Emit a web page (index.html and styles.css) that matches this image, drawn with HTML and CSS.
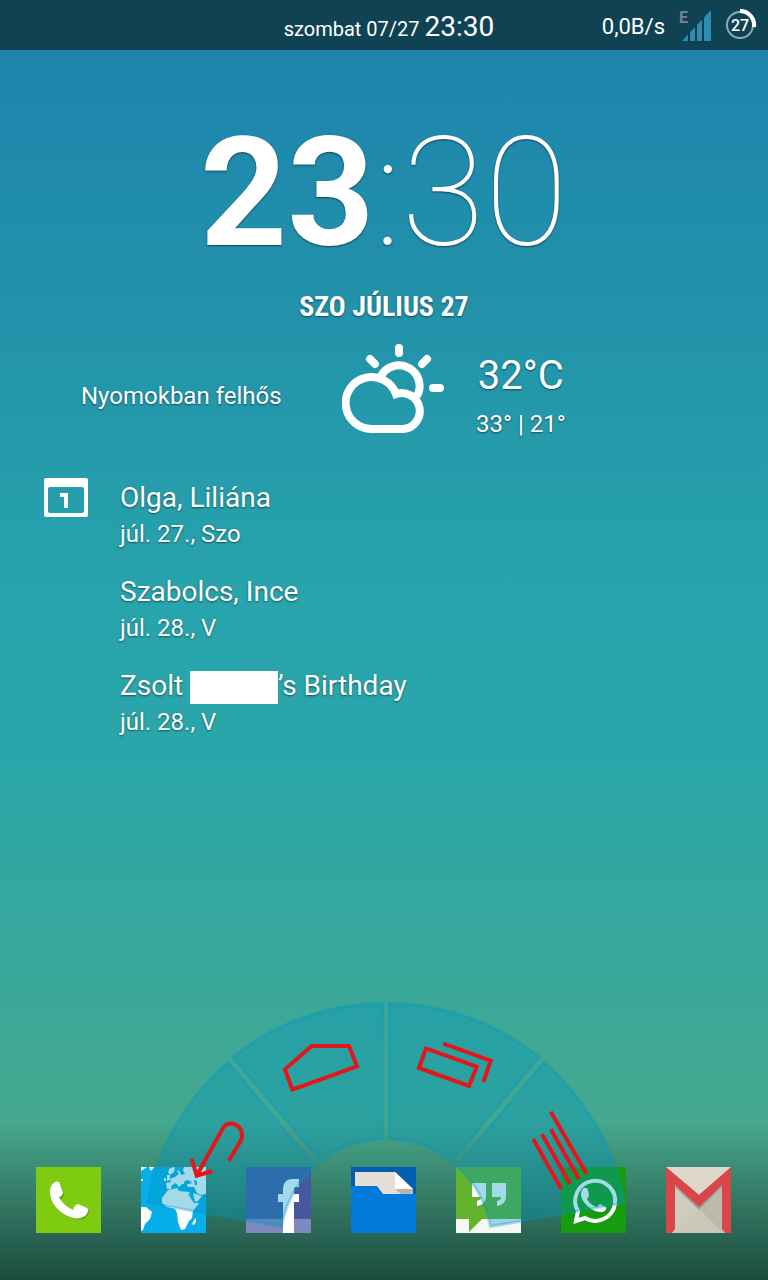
FILE: index.html
```
<!DOCTYPE html>
<html lang="hu">

<head>
    <meta charset="UTF-8">
    <meta name="viewport" content="width=device-width, initial-scale=1">
    <title>Kezdőképernyő</title>
    <link rel="stylesheet" href="styles.css">
</head>

<body>
    <!-- status bar -->
    <header class="status">
        <div class="status-clock">szombat 07/27 <span class="status-time">23:30</span></div>
        <div class="status-icons">
            <span class="status-speed">0,0B/s</span>
            <svg class="status-signal" viewBox="0 0 36 34" aria-label="E">
                <text x="1" y="15" class="signal-type">E</text>
                <path d="M4 33L33 2V33Z" fill="#2c8db0" />
                <path d="M11 24V34M18 16V34M25 9V34" stroke="#0e3d50" stroke-width="2" />
            </svg>
            <svg class="status-battery" viewBox="0 0 34 34">
                <circle cx="17" cy="17" r="13" fill="none" stroke="#8fa9b3" stroke-width="2" />
                <path d="M17 3A14 14 0 0 1 31 19" fill="none" stroke="#fff" stroke-width="4" />
                <text x="17" y="23" class="battery-text">27</text>
            </svg>
        </div>
    </header>

    <!-- clock widget -->
    <main class="widget">
        <div class="clock"><span class="clock-hour">23</span>:30</div>
        <div class="date">SZO JÚLIUS 27</div>

        <div class="weather">
            <div class="weather-text">Nyomokban felhős</div>
            <svg class="weather-icon" viewBox="0 0 102 92">
                <g fill="none" stroke="#fff" stroke-width="8">
                    <path d="M31 87A26 26 0 1 1 54 52A18 18 0 1 1 61 87Z" />
                    <path d="M39 34A19 19 0 0 1 75 54" />
                    <path d="M57 6V11M28 17L33 22M85 17L80 22M91 46H98" stroke-linecap="round" />
                </g>
            </svg>
            <div class="weather-temp">
                <div class="temp-now">32°C</div>
                <div class="temp-range">33° | 21°</div>
            </div>
        </div>

        <div class="calendar">
            <svg class="calendar-icon" viewBox="0 0 44 40">
                <path fill="#fff" fill-rule="evenodd" d="M2 0H42Q44 0 44 2V37Q44 39 42 39H2Q0 39 0 37V2Q0 0 2 0ZM6 9Q4 9 4 11V33Q4 35 6 35H38Q40 35 40 33V11Q40 9 38 9Z" />
                <path d="M16 17H22V30" fill="none" stroke="#fff" stroke-width="4" />
            </svg>
            <ul class="events">
                <li class="event">
                    <div class="event-title">Olga, Liliána</div>
                    <div class="event-date">júl. 27., Szo</div>
                </li>
                <li class="event">
                    <div class="event-title">Szabolcs, Ince</div>
                    <div class="event-date">júl. 28., V</div>
                </li>
                <li class="event">
                    <div class="event-title">Zsolt <span class="event-hidden"></span>’s Birthday</div>
                    <div class="event-date">júl. 28., V</div>
                </li>
            </ul>
        </div>
    </main>

    <!-- app dock -->
    <nav class="dock">
        <button class="app" type="button" aria-label="Telefon">
            <svg viewBox="0 0 65 66">
                <rect width="65" height="66" fill="#7ecb0f" />
                <path fill="#5fa50a" d="M19 18C21 16 24 16 25 19L28 28C27 31 25 32 24 32C27 38 32 42 38 45C39 42 41 39 43 39L52 43C54 45 53 47 51 49C48 53 43 53 38 52C25 48 15 38 15 26Z" />
                <path fill="#fff" d="M18 16C20 14 23 14 24 17L27 26C26 29 24 30 23 30C26 36 31 40 37 43C38 40 40 37 42 37L51 41C53 43 52 45 50 48C47 51 42 52 37 51C24 47 14 37 14 24C14 20 16 17 18 16Z" />
            </svg>
        </button>
        <button class="app" type="button" aria-label="Böngésző">
            <svg viewBox="0 0 65 66">
                <rect width="65" height="66" fill="#06aeea" />
                <g fill="#fff">
                    <path d="M26 22L25 16L30 15L29 12L34 10L38 7L36 4L40 0H65V27L60 28L56 26L53 20H47L46 17L41 17L38 20L35 16L31 18L30 22Z" />
                    <path d="M27 23L36 21L38 24L48 25L53 36L58 36L52 44L51 51L48 54L44 62L40 63L37 55L36 46L34 42L26 40L21 36L21 31Z" />
                    <path d="M52 26L61 29L57 34L54 35Z" />
                    <path d="M0 40L5 40L11 45L9 52L4 57L2 63L0 64Z" />
                    <path d="M53 53L55 51V55L53 58L51 57Z" />
                    <path d="M0 0H6L3 2L0 4ZM8 0H13L10 4ZM26 8L29 8L29 13L26 14ZM23 11H25V14H23ZM29 1L34 0L33 5L29 8L27 5ZM0 12H2V14H0Z" />
                </g>
                <g fill="#06aeea">
                    <path d="M43 15L46 13L49 14L51 16L47 17H43ZM53 13L56 14V18L54 18ZM37 3L39 5L40 8L44 7L42 3L43 0H40ZM49 27L54 35L53 36L47 27Z" />
                </g>
            </svg>
        </button>
        <button class="app" type="button" aria-label="Facebook">
            <svg viewBox="0 0 65 66">
                <rect width="65" height="66" fill="#4658a0" />
                <rect y="52" width="65" height="14" fill="#8089bd" />
                <path fill="#fff" d="M37 66V35H32V27H37V23C37 15 41 12 47 12H53V20H50C48 20 48 21 48 23V27H53V35H48V66Z" />
            </svg>
        </button>
        <button class="app" type="button" aria-label="Fájlok">
            <svg viewBox="0 0 65 66">
                <rect width="65" height="66" fill="#0060ae" />
                <path fill="#007bdc" d="M0 19H26L32 27H65V66H0Z" />
                <path fill="#e3dfd5" d="M4 5H44L62 22V27H32L26 19H4Z" />
                <path fill="#fff" d="M44 5L62 22H44Z" />
                <path fill="#bab5aa" d="M44 22H62V27H50Z" />
            </svg>
        </button>
        <button class="app" type="button" aria-label="Hangouts">
            <svg viewBox="0 0 65 66">
                <rect width="65" height="66" fill="#f5f7f5" />
                <path fill="#63b32e" d="M0 0H65V52H26L13 65V52H0Z" />
                <path fill="#fff" d="M16 16H30V28C30 35 27 38 21 39V34C24 33 25 32 25 30H16ZM36 16H50V28C50 35 47 38 41 39V34C44 33 45 32 45 30H36Z" />
            </svg>
        </button>
        <button class="app" type="button" aria-label="WhatsApp">
            <svg viewBox="0 0 65 66">
                <rect width="65" height="66" fill="#179c0e" />
                <path fill="none" stroke="#fff" stroke-width="4" d="M15 54L17 44A20 20 0 1 1 24 51Z" />
                <path fill="#fff" d="M21 23C23 20 26 20 27 23L28 28C28 30 26 31 26 32C28 36 32 39 36 40L39 37L45 40C46 43 43 45 40 45C30 45 19 34 20 26Z" />
            </svg>
        </button>
        <button class="app" type="button" aria-label="Gmail">
            <svg viewBox="0 0 65 66">
                <rect width="65" height="66" fill="#cfcbbe" />
                <path fill="#bdbaac" d="M33 42L57 18V66Z" />
                <path fill="#cbc8bb" d="M8 66L33 42L57 66Z" />
                <path fill="#a09d92" d="M9 20L33 43L56 20V16H9Z" />
                <path fill="#dcd7c9" d="M0 0H65L33 28Z" />
                <path fill="#d94548" d="M0 0L33 28L65 0V66H59L56 62V18L33 40L9 18V62L6 66H0Z" />
            </svg>
        </button>
    </nav>

    <!-- pie control over the dock -->
    <svg class="pie" viewBox="0 0 492 250">
        <a href="#back" aria-label="Vissza">
            <path class="slice" d="M90 62A242 242 0 0 0 9.7 203L143.6 226.6A106 106 0 0 1 177.4 166.2Z" />
            <path class="glyph" d="M90.7 161L102 142C110 128 92 117 85 128L59 175M53.7 159L58.7 175.7L74.3 171" />
        </a>
        <a href="#home" aria-label="Kezdőlap">
            <path class="slice" d="M245 3A242 242 0 0 0 94.8 57.2L182.2 161.4A106 106 0 0 1 245 139Z" />
            <path class="glyph" d="M173.7 46H211L219 66.3L154.3 89.7L147 69.3Z" />
        </a>
        <a href="#recent" aria-label="Legutóbbiak">
            <path class="slice" d="M251 3A242 242 0 0 1 401.2 57.2L313.8 161.4A106 106 0 0 0 251 139Z" />
            <path class="glyph" d="M288 48.3L338.7 66.7L331 86L281 68ZM305.3 43.7L352.7 60.7L345.3 82" />
        </a>
        <a href="#menu" aria-label="Menü">
            <path class="slice" d="M406 62A242 242 0 0 1 486.3 203L352.4 226.6A106 106 0 0 0 318.6 166.2Z" />
            <path class="glyph" d="M412.7 111.7L448.7 174M412.7 129.3L441 179M404 134.3L432 183.7M395.3 139L423.3 189" />
        </a>
    </svg>
</body>

</html>
```
FILE: styles.css
```
* {
    box-sizing: border-box;
}

body {
    margin: 0;
    min-height: 100vh;
    position: relative;
    display: flex;
    flex-direction: column;
    font-family: Roboto, "Noto Sans", sans-serif;
    color: #fff;
    /* dark fade behind the dock, over the wallpaper */
    background:
        linear-gradient(to top, rgba(10, 30, 25, .68), rgba(10, 30, 25, 0) 160px),
        linear-gradient(#1e84ae 50px, #2292aa 300px, #27a4ac 600px, #2aa6aa 760px, #3ba898 1000px, #48a98c 1150px);
}

/* status bar */
.status {
    display: grid;
    grid-template-columns: 1fr auto 1fr;
    align-items: center;
    height: 50px;
    padding: 0 11px 0 21px;
    background: #0f4354;
}

.status-clock {
    grid-column: 2;
    padding-top: 2px;
    font-size: 20px;
}

.status-time {
    font-size: 28px;
}

.status-icons {
    display: flex;
    justify-content: flex-end;
    align-items: center;
}

.status-speed {
    margin-right: 13px;
    padding-top: 2px;
    font-size: 22px;
}

.status-signal {
    width: 36px;
    height: 34px;
    margin-right: 9px;
    overflow: visible;
}

.status-battery {
    width: 34px;
    height: 34px;
}

.signal-type {
    font-size: 16px;
    font-weight: 700;
    fill: #6f8690;
}

.battery-text {
    font-size: 16px;
    font-weight: 500;
    text-anchor: middle;
    fill: #fff;
}

/* clock widget */
.widget {
    flex: 1;
    text-shadow: 0 1px 2px rgba(0, 0, 0, .5);
}

.clock {
    margin-top: 53px;
    font-size: 152px;
    font-weight: 100;
    line-height: 180px;
    text-align: center;
}

.clock-hour {
    font-weight: 700;
}

.date {
    margin-top: 6px;
    font-family: "Roboto Condensed", "Liberation Sans Narrow", Roboto, sans-serif;
    font-size: 28px;
    font-weight: 700;
    line-height: 36px;
    text-align: center;
}

.weather {
    display: grid;
    grid-template-columns: 262px 102px auto;
    column-gap: 31px;
    align-items: start;
    justify-content: start;
    padding: 17px 0 0 49px;
}

.weather-text {
    padding: 40px 0 0 32px;
    font-size: 24px;
    line-height: 28px;
    white-space: nowrap;
}

.weather-icon {
    width: 102px;
    height: 92px;
}

.weather-temp {
    padding: 8px 0 0 1px;
    text-align: center;
}

.temp-now {
    font-size: 40px;
    line-height: 52px;
}

.temp-range {
    font-size: 24px;
    line-height: 44px;
}

.calendar {
    display: flex;
    gap: 32px;
    padding: 32px 44px 0;
}

.calendar-icon {
    width: 44px;
    height: 40px;
}

.events {
    margin: 0;
    padding: 0;
    list-style: none;
}

.event {
    margin-bottom: 22px;
}

.event-title {
    font-size: 28px;
    line-height: 40px;
}

.event-date {
    font-size: 24px;
    line-height: 32px;
}

.event-hidden {
    display: inline-block;
    width: 88px;
    height: 33px;
    background: #fff;
    vertical-align: middle;
}

/* dock */
.dock {
    display: flex;
    justify-content: space-between;
    padding: 0 37px 47px 36px;
}

.app {
    width: 65px;
    padding: 0;
    border: 0;
    background: none;
    cursor: pointer;
}

.app svg {
    display: block;
    width: 100%;
}

/* pie control */
.pie {
    position: absolute;
    left: 50%;
    bottom: 30px;
    width: 492px;
    height: 250px;
    transform: translateX(-50%);
    pointer-events: none;
}

.pie a {
    pointer-events: auto;
}

.slice {
    fill: rgba(0, 149, 190, .36);
    stroke: rgba(0, 149, 200, .3);
    stroke-width: 3;
}

.glyph {
    fill: none;
    stroke: #e3171b;
    stroke-width: 4;
}
```
